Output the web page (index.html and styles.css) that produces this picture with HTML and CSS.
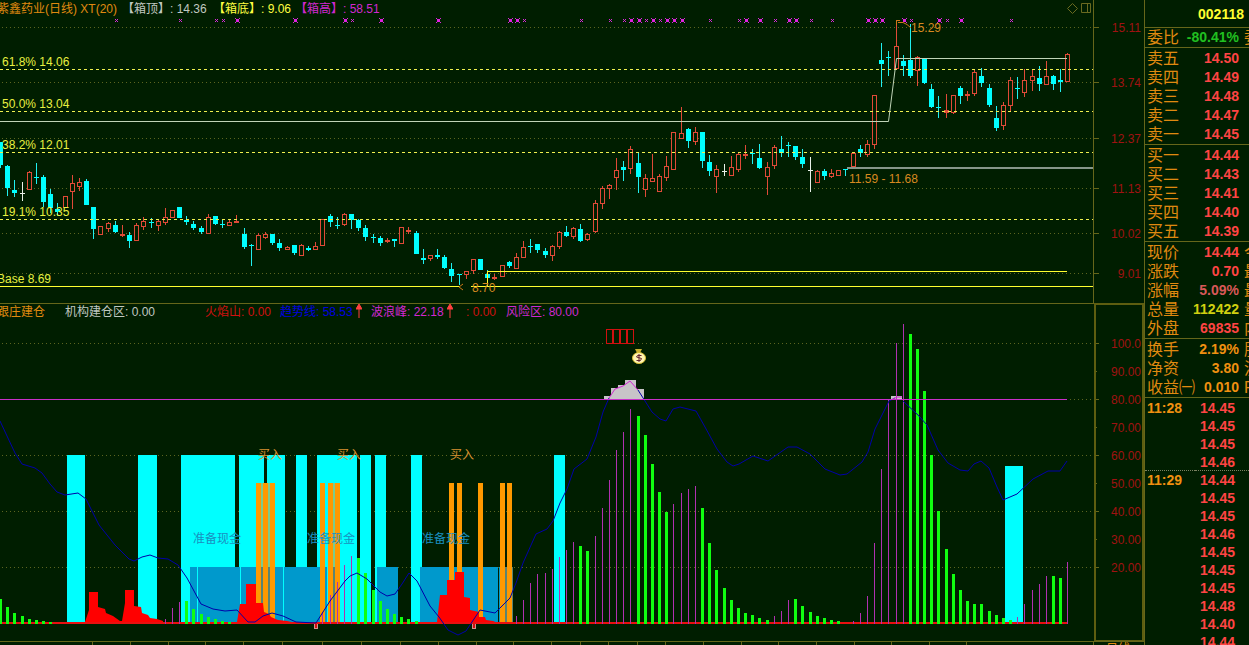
FILE: index.html
```
<!DOCTYPE html>
<html lang="zh-CN">
<head>
<meta charset="utf-8">
<title>002118 紫鑫药业</title>
<link rel="stylesheet" href="styles.css">
</head>
<body>
<div class="terminal">
  <main class="charts">
    <section class="panel" aria-label="K线">
      <header class="legend legend-price">
        <span class="orange clipped">紫鑫药业(日线) XT(20)</span>
        <span class="pale">【箱顶】: 14.36</span>
        <span class="yellow">【箱底】: 9.06</span>
        <span class="magenta">【箱高】: 58.51</span>
      </header>
      <svg class="plot" id="price" viewBox="0 0 1144 303">
        <g id="price-grid"></g>
        <g id="marks"></g>
        <g id="candles"></g>
        <g class="fib-lines">
          <path d="M0 69.5H1093M0 111.5H1093M0 152.5H1093M0 219.5H1093"/>
        </g>
        <path class="box-top" d="M0 121.5H888.5L896.5 58.5H1067"/>
        <path class="box-band" d="M847 168H1093"/>
        <path class="box-base" d="M488 271.5H1067M487.5 271V286M0 286.5H459M471 286.5H1093"/>
        <g class="fib-text">
          <text x="2" y="66">61.8% 14.06</text>
          <text x="2" y="108">50.0% 13.04</text>
          <text x="2" y="149">38.2% 12.01</text>
          <text x="2" y="216">19.1% 10.35</text>
          <text x="-3" y="283">Base 8.69</text>
        </g>
        <g class="note">
          <text x="911" y="32">15.29</text>
          <text x="849" y="183">11.59 - 11.68</text>
          <text x="472" y="292">8.70</text>
        </g>
        <path class="pointer" d="M896.5 25V20.5H900M898 22.5H903L907 24.5L911 28M463 284L459 287L463 290"/>
        <path class="tool" d="M1072.5 3.5L1077.5 8.5L1072.5 13.5L1067.5 8.5ZM1081.5 3.5H1090.5V12.5H1081.5ZM1087.5 3.5V12.5"/>
      </svg>
    </section>
    <section class="panel" aria-label="跟庄建仓">
      <header class="legend legend-flow">
        <span class="orange clipped">跟庄建仓</span>
        <span class="pale">机构建仓区: 0.00</span>
        <span class="red">火焰山: 0.00</span>
        <span class="blue">趋势线: 58.53<svg class="up" viewBox="0 0 6 14"><path d="M3 14V3M0 5L3 0L6 5Z"/></svg></span>
        <span class="magenta">波浪峰: 22.18<svg class="up" viewBox="0 0 6 14"><path d="M3 14V3M0 5L3 0L6 5Z"/></svg></span>
        <span class="red">: 0.00</span>
        <span class="magenta">风险区: 80.00</span>
      </header>
      <svg class="plot" id="flow" viewBox="0 303 1144 342">
        <g id="flow-grid"></g>
        <g id="zones"></g>
        <path class="peaks" d="M85 622L89 610V592H98V607L105 609L106 613L113 616L120 621H122L125 603V590H134V606L141 607L142 613L148 615L150 618L157 619L163 621V623H85ZM237 622L240 604H246V584H256V603H263L264 612L269 614L271 617L278 620L287 621L296 623H237ZM437 622L440 595H447V580H455V572H464V597L470 598V610L479 612V617H485L486 620L493 621L498 623H437Z"/>
        <path class="risk-area" d="M604 400V396H611V388H618V385H625V380H636V389H644V400ZM891 400V396H902V400Z"/>
        <rect class="zero" x="0" y="622" width="1067" height="2"/>
        <g id="waves"></g>
        <path class="trend" d="M0 421L7 436L15 453L22 464L35 468L42 473L50 484L57 492L65 495L78 493L86 499L99 525L115 545L129 559L134 561L142 557L150 555L158 558L168 559L178 565L187 578L201 604L213 609L225 611L237 610L248 622H255L263 616L272 613L283 616L296 622L316 623L330 601L345 581L350 576L357 573L367 579L380 592L387 596L395 594L402 584L409 573L417 581L430 606L439 617L448 630L458 635L466 631L480 610L495 613L510 598L516 583L523 563L536 534L547 529L553 521L560 503L567 489L574 469L587 459L596 437L603 412L609 398"/>
        <path class="trend" d="M638 390L645 401L652 412L660 419L666 421L673 409L680 407L696 411L705 427L717 449L727 462L733 466L739 464L753 456L768 461L788 447H797L810 454L825 469L840 475L847 474L862 462L868 452L875 429L889 401L895 398M903 401L918 415L927 425L938 450L948 463L960 470L968 471L974 464L981 461L989 468L997 487L1003 500L1017 494L1033 479L1048 471H1060L1067 461"/>
        <path class="trend-hot" d="M609 398L615 389L623 386L630 381L638 390M893 399L897 397H902"/>
        <rect class="risk-line" x="0" y="399" width="1067" height="1"/>
        <g class="cash">
          <text x="193" y="543">准备现金</text>
          <text x="307" y="543">准备现金</text>
          <text x="422" y="543">准备现金</text>
        </g>
        <g class="buy">
          <text x="258" y="459">买入</text>
          <text x="337" y="459">买入</text>
          <text x="450" y="459">买入</text>
        </g>
        <path class="sell-boxes" d="M606.5 329.5H633.5V343.5H606.5ZM612.5 329V344M613.5 329V344M619.5 329V344M620.5 329V344M626.5 329V344M627.5 329V344"/>
        <g class="bag">
          <path class="bag-neck" d="M635 349H642L640 353H637Z"/>
          <ellipse class="bag-body" cx="639" cy="358" rx="6.5" ry="5.5"/>
          <path class="bag-sign" d="M641.5 355.5H637.5L636.5 357L641.5 358.5L640.5 360.5H636.5M639 354V362"/>
        </g>
        <path class="sell-tag" d="M314.5 624V628.5H317.5V624M472.5 624V628.5H475.5V624"/>
        <rect class="axis-box" x="1095" y="304" width="48" height="337"/>
        <path class="frame" id="time-axis"/>
        <text class="orange-fill" x="1106" y="653">日线</text>
      </svg>
    </section>
  </main>

  <aside class="quote">
    <div class="code">002118</div>
    <dl class="group single">
      <div class="row"><dt>委比</dt><dd class="green">-80.41%</dd><dd class="more">委差</dd></div>
    </dl>
    <dl class="group">
      <div class="row"><dt>卖五</dt><dd>14.50</dd></div>
      <div class="row"><dt>卖四</dt><dd>14.49</dd></div>
      <div class="row"><dt>卖三</dt><dd>14.48</dd></div>
      <div class="row"><dt>卖二</dt><dd>14.47</dd></div>
      <div class="row"><dt>卖一</dt><dd>14.45</dd></div>
    </dl>
    <dl class="group">
      <div class="row"><dt>买一</dt><dd>14.44</dd></div>
      <div class="row"><dt>买二</dt><dd>14.43</dd></div>
      <div class="row"><dt>买三</dt><dd>14.41</dd></div>
      <div class="row"><dt>买四</dt><dd>14.40</dd></div>
      <div class="row"><dt>买五</dt><dd>14.39</dd></div>
    </dl>
    <dl class="group">
      <div class="row"><dt>现价</dt><dd>14.44</dd><dd class="more">今开</dd></div>
      <div class="row"><dt>涨跌</dt><dd>0.70</dd><dd class="more">最高</dd></div>
      <div class="row"><dt>涨幅</dt><dd class="soft">5.09%</dd><dd class="more">最低</dd></div>
      <div class="row"><dt>总量</dt><dd class="olive">112422</dd><dd class="more">量比</dd></div>
      <div class="row"><dt>外盘</dt><dd>69835</dd><dd class="more">内盘</dd></div>
    </dl>
    <dl class="group">
      <div class="row"><dt>换手</dt><dd class="amber">2.19%</dd><dd class="more">股本</dd></div>
      <div class="row"><dt>净资</dt><dd class="amber">3.80</dd><dd class="more">流通</dd></div>
      <div class="row"><dt>收益㈠</dt><dd class="amber">0.010</dd><dd class="more">PE</dd></div>
    </dl>
    <table class="ticks">
      <tbody>
        <tr><th scope="row">11:28</th><td>14.45</td></tr>
        <tr><th></th><td>14.45</td></tr>
        <tr><th></th><td>14.45</td></tr>
        <tr><th></th><td>14.46</td></tr>
      </tbody>
      <tbody>
        <tr><th scope="row">11:29</th><td>14.44</td></tr>
        <tr><th></th><td>14.45</td></tr>
        <tr><th></th><td>14.45</td></tr>
        <tr><th></th><td>14.46</td></tr>
        <tr><th></th><td>14.45</td></tr>
        <tr><th></th><td>14.45</td></tr>
        <tr><th></th><td>14.45</td></tr>
        <tr><th></th><td>14.48</td></tr>
        <tr><th></th><td>14.40</td></tr>
        <tr><th></th><td>14.44</td></tr>
      </tbody>
    </table>
  </aside>
</div>
<script src="chart.js"></script>
</body>
</html>
```

FILE: styles.css
```
* {
  box-sizing: border-box;
}

body {
  margin: 0;
  background: #001e00;
  color: #e08a10;
  font-family: "Liberation Sans", "Noto Sans CJK SC", sans-serif;
  font-size: 12px;
}

.terminal {
  display: flex;
  height: 100vh;
  overflow: hidden;
}

.charts {
  flex: 1;
  min-width: 0;
}

.panel {
  position: relative;
}

.plot {
  display: block;
  width: 100%;
  height: auto;
}

.legend {
  position: absolute;
  top: 0;
  left: 0;
  display: grid;
  padding-top: 1px;
  line-height: 16px;
  white-space: nowrap;
}

.legend-price {
  grid-template-columns: 122px 91px 82px auto;
}

.legend-flow {
  grid-template-columns: 65px 140px 75px 91px 95px 40px auto;
}

.clipped {
  margin-left: -3px;
}

.up {
  width: 6px;
  height: 14px;
  margin-left: 3px;
  vertical-align: -2px;
  fill: #ff4040;
  stroke: #ff4040;
}

.orange { color: #e08a10; }
.pale { color: #c0c8c0; }
.yellow { color: #ffff40; }
.magenta { color: #d028d0; }
.red { color: #d01010; }
.blue { color: #0000e0; }

/* chart strokes and fills */
.plot text {
  font-size: 12px;
}

.grid {
  fill: none;
  stroke: #5c6420;
  stroke-dasharray: 1 3;
  shape-rendering: crispEdges;
}

.frame {
  fill: none;
  stroke: #66661a;
  shape-rendering: crispEdges;
}

.axis-box {
  fill: none;
  stroke: #5e5e10;
  stroke-width: 2;
  shape-rendering: crispEdges;
}

.scale {
  fill: #a01212;
  text-anchor: end;
}

.orange-fill { fill: #e08a10; }

.mark {
  fill: none;
  stroke: #d828d8;
  shape-rendering: crispEdges;
}

.mark-bold {
  fill: #e020e0;
  shape-rendering: crispEdges;
}

.up-candle {
  fill: #001e00;
  stroke: #e04a38;
  shape-rendering: crispEdges;
}

.up-wick {
  stroke: #e04a38;
  shape-rendering: crispEdges;
}

.flat-candle {
  fill: #e04a38;
  shape-rendering: crispEdges;
}

.down-candle {
  fill: #00ffff;
  shape-rendering: crispEdges;
}

.down-wick {
  stroke: #20f0f0;
  shape-rendering: crispEdges;
}

.doji {
  stroke: #e8f0e8;
  shape-rendering: crispEdges;
}

.fib-lines {
  fill: none;
  stroke: #f0f050;
  stroke-dasharray: 3 3;
  shape-rendering: crispEdges;
}

.fib-text { fill: #e8f040; }
.note { fill: #d88a20; }

.box-top {
  fill: none;
  stroke: #c0d4b8;
}

.box-band {
  stroke: #86968a;
  stroke-width: 2;
}

.box-base {
  fill: none;
  stroke: #ffff30;
}

.pointer {
  fill: none;
  stroke: #d07818;
}

.tool {
  fill: none;
  stroke: #6a6a20;
}

.zone-cyan { fill: #00ffff; }
.zone-teal { fill: #0099cc; }
.zone-orange { fill: #ff9900; }
.zone-mix { fill: #7ccc8c; }
.zone-mix-low { fill: #5a8472; }
.zone-gap { fill: #001e00; }

.zone-cyan,
.zone-teal,
.zone-orange,
.zone-mix,
.zone-mix-low,
.zone-gap,
.wave-up,
.wave-down,
.zero,
.risk-line {
  shape-rendering: crispEdges;
}

.wave-up { fill: #b030b0; }
.wave-down { fill: #10ff10; }

.peaks { fill: #ff0000; }
.zero { fill: #e81010; }
.risk-area { fill: #c8c4c8; }
.risk-line { fill: #c830c8; }

.trend {
  fill: none;
  stroke: #0000a8;
}

.trend-hot {
  fill: none;
  stroke: #d028d0;
}

.cash { fill: #1a90c0; }
.buy { fill: #d89030; }

.sell-boxes {
  fill: none;
  stroke: #d01010;
  shape-rendering: crispEdges;
}

.bag-neck { fill: #c8b030; }

.bag-body {
  fill: #fff4b0;
  stroke: #d8c030;
}

.bag-sign {
  fill: none;
  stroke: #602030;
}

.sell-tag {
  fill: #d01010;
  stroke: #d09090;
  shape-rendering: crispEdges;
}

/* quote column */
.quote {
  flex: 0 0 105px;
  overflow: hidden;
  border-left: 1px solid #66661a;
}

.code {
  height: 27px;
  padding: 1px 5px 0 0;
  color: #ffff30;
  font-size: 14px;
  font-weight: bold;
  line-height: 27px;
  text-align: right;
}

.group {
  margin: 0;
  padding: 1px 0 0 2px;
  border-top: 1px solid #66661a;
}

.group.single {
  padding-top: 0;
}

.row {
  display: grid;
  grid-template-columns: 32px 60px 32px;
  height: 19px;
  line-height: 19px;
  white-space: nowrap;
}

.row dt,
.row .more {
  color: #e08a10;
  font-size: 16px;
  font-weight: normal;
  text-align: left;
}

.row dd {
  margin: 0;
  color: #ff4444;
  font-size: 14px;
  font-weight: bold;
  text-align: right;
}

.row .more {
  padding-left: 5px;
}

.row .green { color: #20c020; }
.row .soft { color: #d85858; }
.row .olive { color: #d0d010; }
.row .amber { color: #f09010; }

.ticks {
  width: 100%;
  border-collapse: separate;
  border-spacing: 0;
  border-top: 1px solid #66661a;
  font-size: 14px;
  font-weight: bold;
  line-height: 16px;
}

.ticks th {
  width: 50px;
  height: 18px;
  padding: 1px 0 0 2px;
  color: #f09010;
  text-align: left;
}

.ticks td {
  height: 18px;
  padding: 1px 14px 0 0;
  color: #ff4444;
  text-align: right;
}

.ticks tbody + tbody tr:first-child > * {
  border-top: 1px dotted #7a8060;
}
```

FILE: chart.js
```
const NS = "http://www.w3.org/2000/svg";

function add(parent, tag, cls, attrs, text) {
  const el = document.createElementNS(NS, tag);
  el.setAttribute("class", cls);
  for (const key in attrs) el.setAttribute(key, attrs[key]);
  if (text) el.textContent = text;
  parent.appendChild(el);
}

const byId = (id) => document.getElementById(id);

// price scale
const priceGrid = byId("price-grid");
[["15.11", 27], ["13.74", 82], ["12.37", 138], ["11.13", 188], ["10.02", 233], ["9.01", 273]].forEach(([label, y]) => {
  add(priceGrid, "path", "grid", { d: `M2 ${y + 0.5}H1093` });
  add(priceGrid, "path", "frame", { d: `M1094 ${y + 0.5}H1099` });
  add(priceGrid, "text", "scale", { x: 1141, y: y + 5 }, label);
});
add(priceGrid, "path", "frame", { d: "M1093.5 0V303" });

// indicator scale
const flowGrid = byId("flow-grid");
for (let v = 100; v >= 20; v -= 10) {
  const y = Math.round(623 - v * 2.8) + 0.5;
  const major = v % 20 === 0;
  if (major) add(flowGrid, "path", "grid", { d: `M2 ${y}H1093` });
  add(flowGrid, "path", "frame", { d: `M1096 ${y}H${major ? 1099 : 1097}` });
  add(flowGrid, "text", "scale", { x: 1141, y: y + 4.5 }, v === 100 ? "100.0" : v.toFixed(2));
}
add(flowGrid, "path", "frame", { d: "M0 303.5H1144" });

byId("time-axis").setAttribute("d", "M0 641.5H1144M1093.5 641V645" +
  [92, 130, 168, 205, 243, 282, 322, 361, 400, 438, 476, 513, 551, 580, 608, 637, 665, 703, 741, 778, 816, 854, 891, 929, 966]
    .map((x) => `M${x}.5 641V645`).join(""));

// signal marks: x, 1 = strong
const marks = byId("marks");
[[116, 0], [180, 0], [216, 0], [223, 0], [237, 1], [295, 1], [345, 1], [352, 0], [381, 1], [438, 1], [510, 1], [517, 1],
 [524, 0], [581, 0], [610, 0], [624, 0], [631, 1], [639, 1], [646, 0], [653, 1], [660, 0], [667, 1], [674, 1], [682, 1],
 [710, 0], [739, 0], [746, 1], [760, 1], [775, 0], [789, 1], [796, 1], [811, 0], [832, 0], [868, 1], [875, 1], [882, 1],
 [904, 1], [911, 0], [939, 1], [947, 0], [961, 1], [1011, 0]].forEach(([x, strong]) => {
  const r = strong ? 2 : 1;
  add(marks, "path", "mark", { d: `M${x - r} ${20 - r}L${x + r + 1} ${21 + r}M${x + r + 1} ${20 - r}L${x - r} ${21 + r}` });
  if (strong) add(marks, "rect", "mark-bold", { x: x - 1, y: 19, width: 3, height: 3 });
});

// x, high, body top, body bottom, low, kind (u up, d down, r small up, w doji)
const candles = `0 142 142 165 168 d|7 165 166 188 196 d|14 180 190 193 197 d|22 182 193 193 201 w|29 171 172 189 190 u|36 163 177 178 184 d|43 175 177 202 207 d|50 189 194 208 213 d|57 203 209 212 216 d|65 196 196 207 208 u|72 175 183 191 209 u|79 178 182 186 191 u|86 179 181 205 205 d|93 207 207 229 239 d|100 226 226 234 234 u|108 222 223 228 232 u|115 221 225 232 233 d|122 225 234 236 237 r|129 232 235 241 248 d|136 223 225 240 241 u|143 217 221 226 230 u|151 218 222 223 228 d|158 220 221 225 231 u|165 208 217 222 225 u|172 210 210 217 218 u|179 207 207 218 218 d|186 216 220 222 225 d|193 221 224 228 230 d|201 226 228 232 234 d|208 214 217 233 234 u|215 216 216 224 225 d|222 220 224 225 228 d|229 219 222 225 226 u|236 215 221 223 223 r|244 228 234 247 249 d|251 244 245 246 266 d|258 233 235 249 250 u|265 232 234 237 239 u|272 234 234 243 245 d|279 239 243 248 251 d|287 246 247 249 250 u|294 245 245 253 255 d|301 244 245 255 255 u|308 246 248 250 251 d|315 242 246 249 250 u|322 219 219 245 246 u|330 214 216 222 227 d|337 217 225 226 229 d|344 213 214 224 226 u|351 214 214 220 229 d|358 219 220 228 231 d|365 225 228 237 241 d|373 234 237 238 243 d|380 236 238 243 246 d|387 238 240 242 243 r|394 239 239 241 247 d|401 227 227 243 244 u|408 227 230 232 234 r|416 231 233 254 254 d|423 249 258 260 264 d|430 255 255 258 261 u|437 249 255 257 259 d|444 255 257 268 269 d|451 263 269 276 282 d|459 274 274 275 285 d|466 271 271 274 279 u|473 259 259 270 274 u|480 259 259 270 270 d|487 270 274 278 282 d|494 274 277 279 280 r|502 265 265 276 277 u|509 261 262 266 268 d|516 253 257 268 269 u|523 241 247 257 258 u|530 239 246 247 253 d|537 244 244 250 253 d|545 248 251 255 258 d|552 245 246 255 261 u|559 231 232 246 249 u|566 226 232 236 237 d|573 227 228 236 239 u|580 224 229 241 242 d|587 233 234 239 241 u|595 200 203 231 233 u|602 186 188 203 209 u|609 184 185 188 199 u|616 158 170 177 190 u|623 161 167 170 181 d|630 146 149 168 174 u|638 152 163 177 193 d|645 174 178 189 197 u|652 154 178 181 182 u|659 174 176 191 192 u|666 156 166 177 181 u|673 132 132 169 170 u|681 107 133 138 139 u|688 128 129 141 148 d|695 127 132 141 145 u|702 132 132 161 168 d|709 155 162 171 176 d|716 165 169 176 193 u|724 164 171 171 176 w|731 156 167 175 176 u|738 153 154 169 172 u|745 145 154 156 159 r|752 149 153 154 164 d|759 144 158 168 169 d|767 162 167 176 195 u|774 145 147 165 169 u|781 136 149 153 157 d|788 142 145 146 157 d|795 146 146 157 160 d|802 149 157 164 168 d|810 157 170 170 192 w|817 170 171 182 183 u|824 169 171 176 180 d|831 169 173 176 178 u|838 170 170 175 176 u|845 169 169 170 176 d|853 152 153 166 168 u|860 145 149 153 157 d|867 140 144 154 157 u|874 95 95 144 149 u|881 43 60 64 87 d|888 51 57 58 76 d|896 20 46 68 69 u|903 55 61 66 76 d|910 24 60 76 78 d|917 56 57 70 86 u|924 58 59 83 84 d|931 84 89 107 108 d|938 96 107 108 118 d|946 94 110 113 118 r|953 95 95 112 114 u|960 86 88 96 104 d|967 91 94 96 101 r|974 69 72 93 96 u|981 68 76 83 87 d|989 84 88 105 107 d|996 106 118 128 131 d|1003 102 105 125 130 u|1010 77 80 105 111 u|1017 77 88 89 99 d|1024 69 80 92 97 u|1032 69 76 80 91 u|1039 66 78 84 91 d|1046 61 76 84 85 u|1053 75 76 84 90 d|1060 69 80 82 92 d|1067 53 54 81 82 u`;
const candleLayer = byId("candles");
const wick = { u: "up-wick", r: "up-wick", d: "down-wick", w: "doji" };
candles.split("|").forEach((row) => {
  const parts = row.split(" ");
  const kind = parts[5];
  const [x, high, top, bottom, low] = parts.map(Number);
  add(candleLayer, "path", wick[kind], { d: `M${x + 0.5} ${high}V${low}` });
  if (kind === "u") {
    add(candleLayer, "rect", "up-candle", { x: x - 1.5, y: top + 0.5, width: 4, height: Math.max(bottom - top, 2) });
  } else if (kind === "w") {
    add(candleLayer, "path", "doji", { d: `M${x - 2} ${top + 0.5}H${x + 3}` });
  } else {
    add(candleLayer, "rect", kind === "d" ? "down-candle" : "flat-candle",
      { x: x - 2, y: top, width: 5, height: bottom - top });
  }
});

// background zones: class, top, list of [left, right]
const zones = byId("zones");
[["zone-cyan", 455, [[67, 85], [138, 157], [181, 235], [239, 285], [296, 307], [317, 357], [360, 371], [375, 386], [411, 422], [554, 565]]],
 ["zone-cyan", 466, [[1005, 1023]]],
 ["zone-teal", 567, [[190, 197], [198, 240], [241, 283], [284, 327], [377, 398], [420, 498], [499, 513]]],
 ["zone-mix", 483, [[261, 263], [268, 270], [333, 335]]],
 ["zone-mix-low", 567, [[261, 263], [268, 270], [333, 335], [505, 507], [512, 513]]],
 ["zone-orange", 483, [[256, 261], [263, 268], [270, 275], [320, 325], [328, 333], [335, 340], [449, 454], [457, 462], [478, 483], [500, 505], [507, 512]]]
].forEach(([cls, top, spans]) => spans.forEach(([left, right]) =>
  add(zones, "rect", cls, { x: left, y: top, width: right - left, height: 622 - top })));
add(zones, "rect", "zone-gap", { x: 264, y: 455, width: 3, height: 28 });

// histogram: x top pairs
const falling = "0 599 7 607 14 613 22 616 29 619 36 620 43 621 50 622 186 601 193 609 201 614 208 617 215 619 222 621 229 622 358 558 365 573 373 590 380 601 387 609 394 614 401 617 408 619 416 621 580 546 587 551 638 416 645 435 652 464 659 492 666 512 702 508 709 543 716 570 724 588 731 600 738 608 745 613 752 615 759 618 767 620 795 599 802 606 810 612 817 616 824 618 831 620 838 621 910 334 917 349 924 391 931 455 938 511 946 549 953 574 960 590 967 601 974 604 981 604 989 611 996 615 1003 618 1010 620 1053 576 1060 578";
const rising = "165 619 172 608 179 602 322 612 330 595 337 582 344 565 351 556 516 616 523 600 530 583 537 574 545 573 552 569 559 557 566 550 573 542 595 536 602 508 609 480 616 450 623 432 630 409 673 504 681 493 688 489 695 486 774 616 781 611 788 600 853 621 860 613 867 596 874 543 881 469 888 400 896 343 903 324 1017 617 1024 604 1032 590 1039 584 1046 576 1067 562";
const waves = byId("waves");
function bars(data, cls, width) {
  const n = data.split(" ").map(Number);
  for (let i = 0; i < n.length; i += 2) {
    add(waves, "rect", cls, { x: n[i] - (width - 1) / 2, y: n[i + 1], width, height: 624 - n[i + 1] });
  }
}
bars(falling, "wave-down", 3);
bars(rising, "wave-up", 1);
```
